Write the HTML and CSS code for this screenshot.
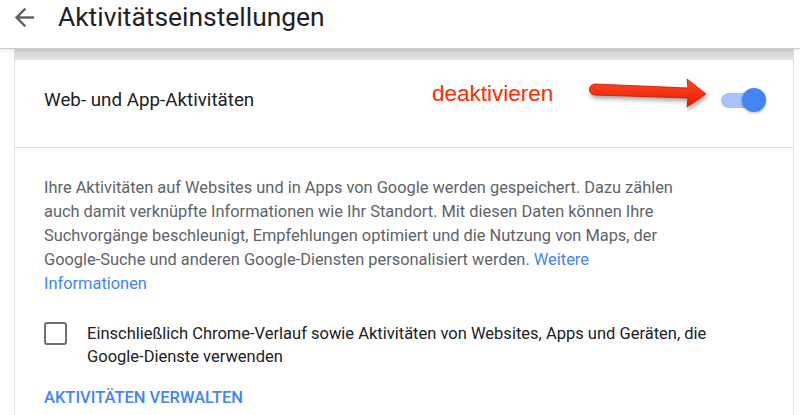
FILE: index.html
```html
<!DOCTYPE html>
<html lang="de">

<head>
    <meta charset="UTF-8">
    <meta name="viewport" content="width=device-width, initial-scale=1.0">
    <title>Aktivitätseinstellungen</title>
    <link rel="stylesheet" href="styles.css">
</head>

<body>
    <header class="topbar">
        <svg class="back-icon" viewBox="0 0 24 24" aria-hidden="true">
            <path d="M20 11H7.83l5.59-5.59L12 4l-8 8 8 8 1.41-1.41L7.83 13H20v-2z"></path>
        </svg>
        <h1>Aktivitätseinstellungen</h1>
    </header>

    <main class="page">
        <section class="card">
            <div class="card-head">
                <h2>Web- und App-Aktivitäten</h2>

                <!-- Markierung aus dem Screenshot -->
                <span class="note">deaktivieren</span>
                <svg class="note-arrow" viewBox="0 0 124 36" aria-hidden="true">
                    <defs>
                        <linearGradient id="arrowFill" x1="0" y1="0" x2="0" y2="1">
                            <stop offset="0" stop-color="#ff4a26"></stop>
                            <stop offset="1" stop-color="#e81a00"></stop>
                        </linearGradient>
                    </defs>
                    <path d="M7 8 L100 12 L99 3 L118 18 L99 31 L100 22 L7 19 A5.5 5.5 0 0 1 7 8 Z"></path>
                </svg>

                <div class="toggle on">
                    <span class="track"></span>
                    <span class="thumb"></span>
                </div>
            </div>

            <div class="card-body">
                <p class="desc">Ihre Aktivitäten auf Websites und in Apps von Google werden gespeichert. Dazu zählen auch damit verknüpfte Informationen wie Ihr Standort. Mit diesen Daten können Ihre Suchvorgänge beschleunigt, Empfehlungen optimiert und die Nutzung von Maps, der Google-Suche und anderen Google-Diensten personalisiert werden. <a href="#">Weitere Informationen</a></p>

                <label class="check-row">
                    <span class="checkbox"></span>
                    <span class="check-text">Einschließlich Chrome-Verlauf sowie Aktivitäten von Websites, Apps und Geräten, die Google-Dienste verwenden</span>
                </label>

                <a class="manage" href="#">Aktivitäten verwalten</a>
            </div>
        </section>
    </main>
</body>

</html>
```

FILE: styles.css
```css
* {
    margin: 0;
    padding: 0;
    box-sizing: border-box;
}

body {
    font-family: Roboto, "Noto Sans", sans-serif;
    background-color: #fff;
    color: #202124;
    height: 100vh;
    overflow: hidden;
}

a {
    color: #4285f4;
    text-decoration: none;
}

/* kopfzeile */
.topbar {
    height: 49px;
    display: flex;
    align-items: flex-start;
    padding: 3px 0 0 10px;
    border-bottom: 1px solid #cfcfcf;
    box-shadow: 0 1px 4px rgba(0, 0, 0, 0.12);
    position: relative;
    z-index: 1;
}

.back-icon {
    width: 29px;
    height: 29px;
    fill: #5f6368;
    margin-right: 19px;
}

.topbar h1 {
    font-size: 26.4px;
    font-weight: 400;
    line-height: 28px;
    color: #202124;
}

.page {
    padding: 0 6px 0 14px;
}

.card {
    border-left: 1px solid #e2e2e2;
    border-right: 1px solid #e2e2e2;
    height: calc(100vh - 49px);
}

.card-head {
    position: relative;
    height: 99px;
    display: flex;
    align-items: center;
    justify-content: space-between;
    padding: 4px 27px 0 29px;
    border-bottom: 1px solid #e0e0e0;
    background: linear-gradient(#d3d3d3, #e4e4e4 11px, #fff 11px);
}

.card-head h2 {
    font-size: 18.8px;
    font-weight: 400;
    color: #202124;
}

.note {
    position: absolute;
    left: 417px;
    top: 32px;
    font-family: "Liberation Sans", Arial, sans-serif;
    font-size: 22.5px;
    line-height: 25px;
    color: #ff2a00;
}

.note-arrow {
    position: absolute;
    left: 573px;
    top: 27px;
    width: 124px;
    height: 36px;
    overflow: visible;
    filter: drop-shadow(1px 3px 2px rgba(0, 0, 0, 0.35));
}

.note-arrow path {
    fill: url(#arrowFill);
    stroke: #c81400;
    stroke-width: 0.8;
}

/* schalter */
.toggle {
    position: relative;
    width: 45px;
    height: 24px;
}

.toggle .track {
    position: absolute;
    left: 0;
    top: 5px;
    width: 34px;
    height: 15px;
    border-radius: 8px;
    background-color: #a6c4f8;
}

.toggle .thumb {
    position: absolute;
    right: 0;
    top: 0;
    width: 24px;
    height: 24px;
    border-radius: 50%;
    background-color: #4285f4;
    box-shadow: 0 1px 3px rgba(0, 0, 0, 0.3);
}

.card-body {
    padding: 28px 29px 0 29px;
}

.desc {
    width: 640px;
    font-size: 16.4px;
    line-height: 24px;
    color: #5f6368;
}

.check-row {
    display: flex;
    align-items: flex-start;
    gap: 20px;
    margin-top: 26px;
}

.checkbox {
    flex: none;
    width: 23px;
    height: 23px;
    border: 2px solid #6f6f6f;
    border-radius: 3px;
}

.check-text {
    width: 640px;
    font-size: 16.5px;
    line-height: 23px;
    color: #202124;
}

.manage {
    display: inline-block;
    margin-top: 18px;
    font-size: 16.5px;
    font-weight: 500;
    line-height: 24px;
    text-transform: uppercase;
    color: #4285f4;
}
```
